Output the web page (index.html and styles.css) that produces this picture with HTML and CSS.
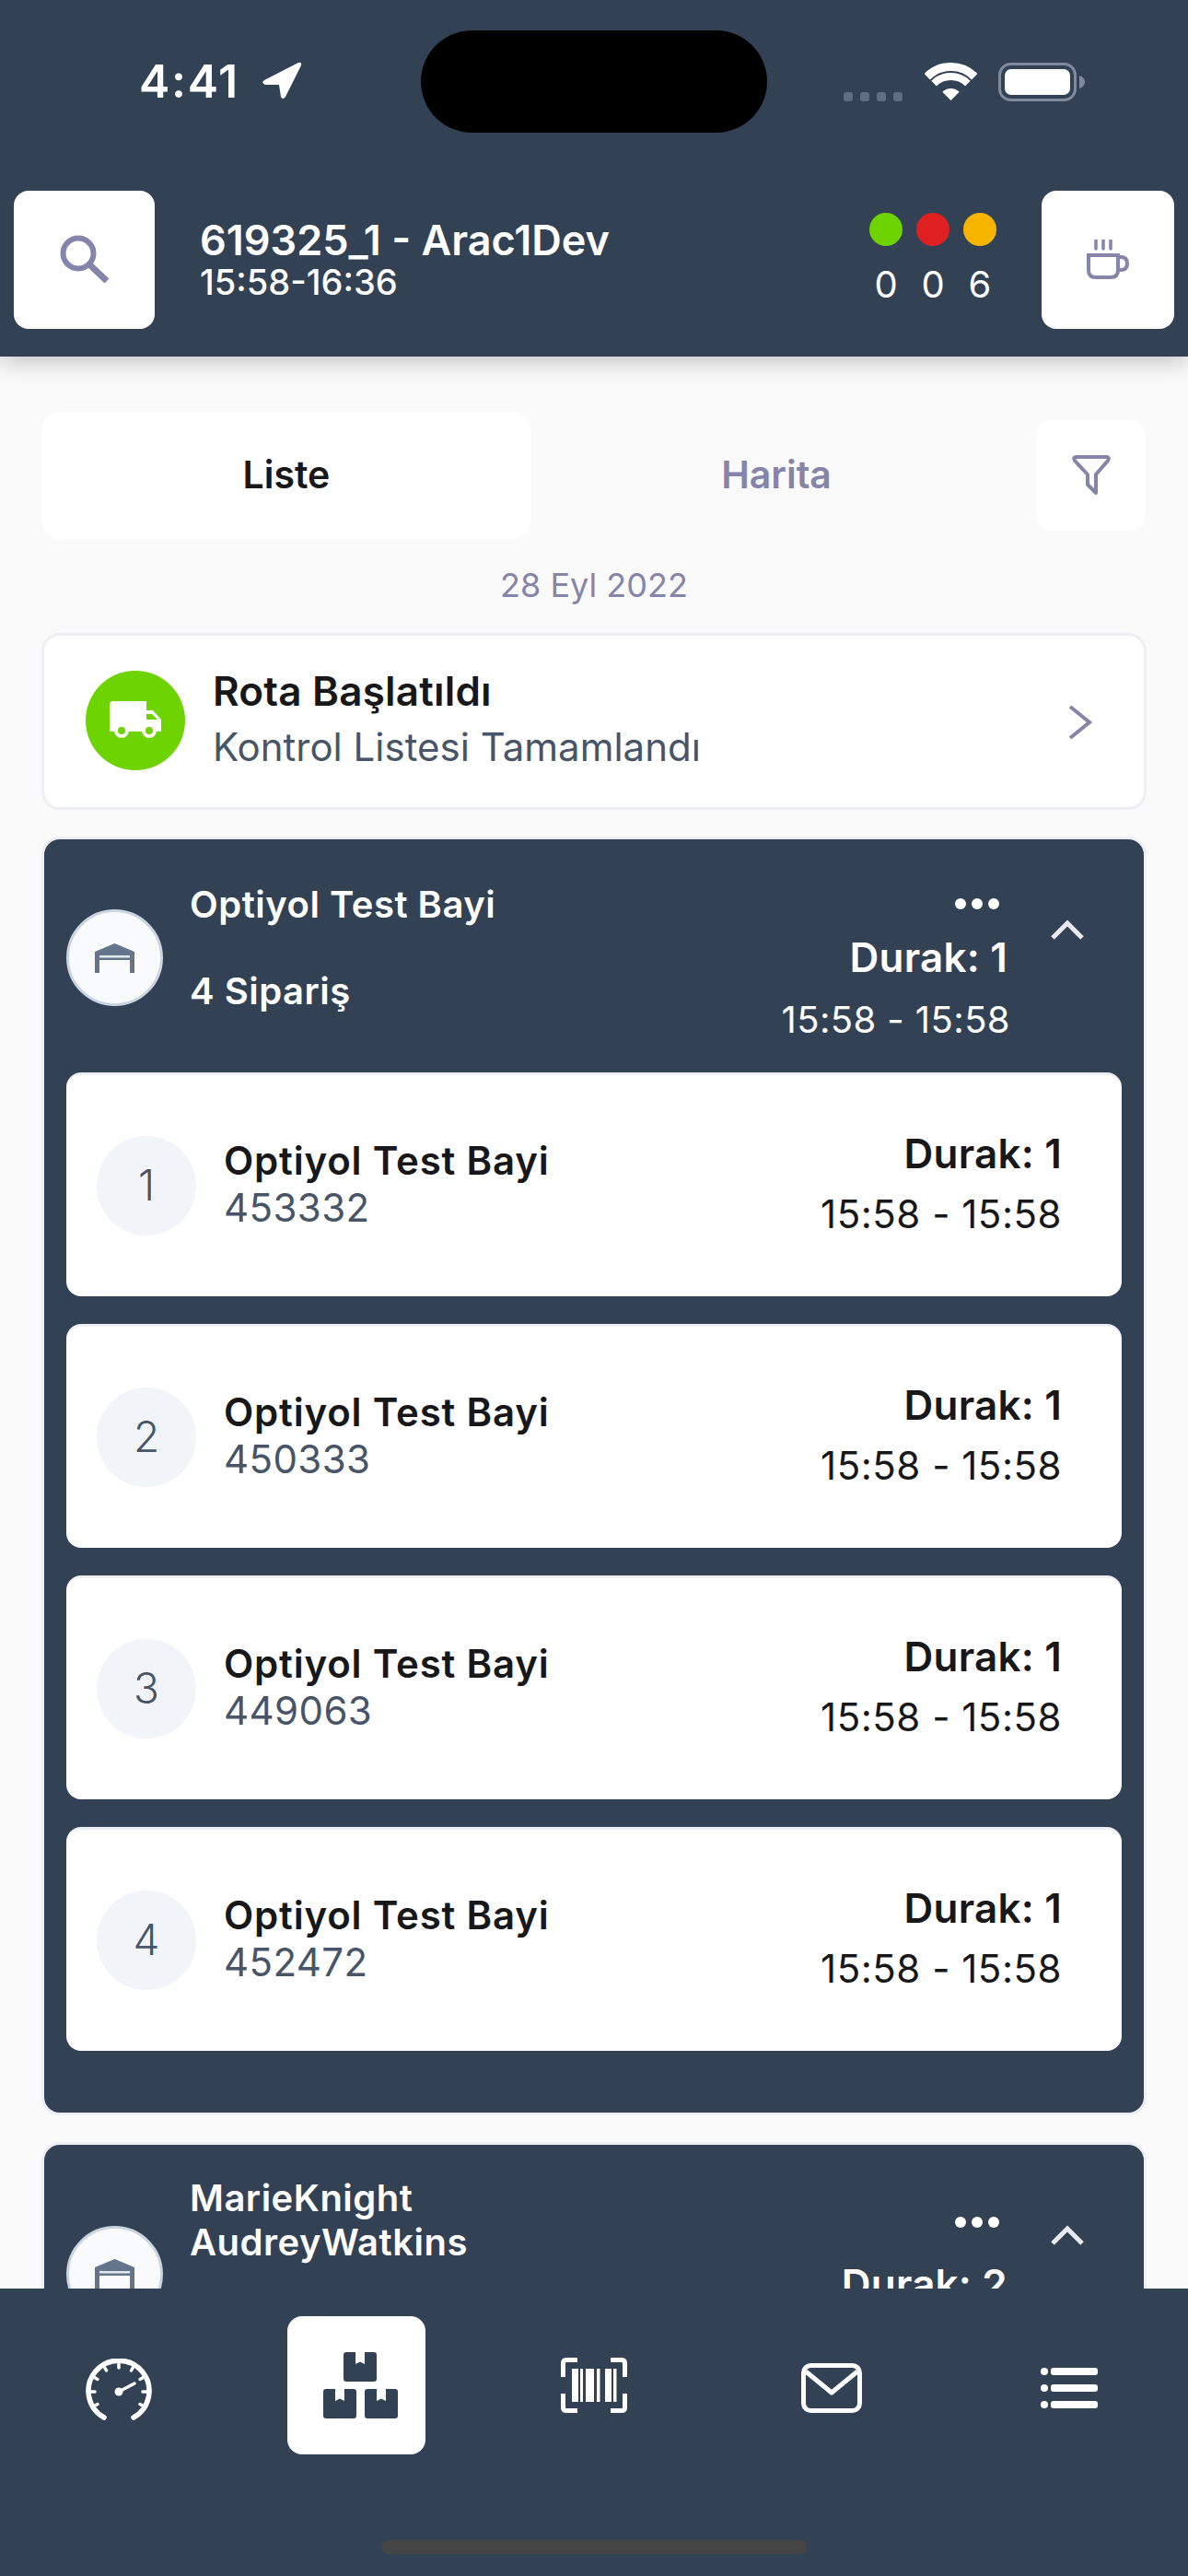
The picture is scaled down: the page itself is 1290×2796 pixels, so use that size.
FILE: index.html
```html
<!DOCTYPE html>
<html lang="tr">
<head>
  <meta charset="UTF-8" />
  <title>Rota</title>
  <link rel="stylesheet" href="styles.css">
</head>
<body>

<svg class="defs" width="0" height="0">
  <symbol id="warehouse" viewBox="0 0 43 32">
    <path d="M0 9 L21.500 0 L43 9 V32 H38 V18 H5 V32 H0 Z" fill="#64748b"/>
    <rect x="5" y="13" width="33" height="2.500" fill="#e2e8f0"/>
  </symbol>
  <symbol id="box" viewBox="0 0 36 32">
    <rect width="36" height="32" rx="3" fill="#334155"/>
    <path d="M13 0 H23 V13 L18 10.500 L13 13 Z" fill="#fff"/>
  </symbol>
</svg>

<header class="topbar">
  <div class="status">
    <div class="status-left">
      <span class="clock">4:41</span>
      <svg class="arrow" width="44" height="41" viewBox="0 0 44 41"><path d="M40 1 L3 20 Q-1 23 4 25 L19 25 L21 38 Q23 42 26 38 L43 4 Q44 0 40 1 Z" fill="#fff"/></svg>
    </div>
    <div class="island"></div>
    <div class="status-right">
      <svg width="65" height="42" viewBox="0 0 65 42" fill="#5f6e80">
        <rect y="32" width="10" height="10" rx="3"/>
        <rect x="18" y="32" width="10" height="10" rx="3"/>
        <rect x="36" y="32" width="10" height="10" rx="3"/>
        <rect x="54" y="32" width="10" height="10" rx="3"/>
      </svg>
      <svg width="57" height="42" viewBox="0 0 57 42" fill="none" stroke="#fff">
        <path d="M2.700 15.200 A36.500 36.500 0 0 1 54.300 15.200" stroke-width="9"/>
        <path d="M10.100 22.600 A26 26 0 0 1 46.900 22.600" stroke-width="8"/>
        <path d="M28.500 41 L19.300 31.800 A13 13 0 0 1 37.700 31.800 Z" fill="#fff" stroke="none"/>
      </svg>
      <svg width="94" height="42" viewBox="0 0 94 42">
        <rect x="1.500" y="1.500" width="82" height="39" rx="12" fill="none" stroke="#7f8b9b" stroke-width="3"/>
        <rect x="7" y="7" width="71" height="28" rx="7" fill="#fff"/>
        <path d="M88 14 Q94 16 94 21 Q94 26 88 28 Z" fill="#7f8b9b"/>
      </svg>
    </div>
  </div>

  <div class="appbar">
    <button class="square-btn search-btn">
      <svg width="54" height="54" viewBox="0 0 54 54" fill="none" stroke="#8584aa" stroke-width="6">
        <circle cx="20" cy="20" r="16.500"/>
        <path d="M32 32 L51 50" stroke-width="7"/>
      </svg>
    </button>
    <div class="route">
      <div class="route-name">619325_1 - Arac1Dev</div>
      <div class="route-time">15:58-16:36</div>
    </div>
    <div class="counters">
      <div class="counter"><span class="dot dot-green"></span><span>0</span></div>
      <div class="counter"><span class="dot dot-red"></span><span>0</span></div>
      <div class="counter"><span class="dot dot-amber"></span><span>6</span></div>
    </div>
    <button class="square-btn coffee-btn">
      <svg width="46" height="44" viewBox="0 0 46 44" fill="none" stroke="#8584aa" stroke-width="4">
        <path d="M10 1 V10 M18 1 V10 M26 1 V10" stroke-linecap="round" stroke-width="3.500"/>
        <path d="M2 17 H34 V33 Q34 41 26 41 H10 Q2 41 2 33 Z"/>
        <path d="M34 19 H37 Q44 19 44 26 Q44 33 37 33 H34"/>
      </svg>
    </button>
  </div>
</header>

<main class="content">
  <div class="tabs">
    <div class="tab tab-active">Liste</div>
    <div class="tab">Harita</div>
    <button class="filter-btn">
      <svg width="42" height="46" viewBox="0 0 42 46" fill="none" stroke="#8584aa" stroke-width="4" stroke-linejoin="round" stroke-linecap="round">
        <path d="M4 3 H38 Q41 3 39 7 L26 22 V42 L17 33 V22 L3 7 Q1 3 4 3 Z"/>
      </svg>
    </button>
  </div>

  <div class="date">28 Eyl 2022</div>

  <div class="notice">
    <div class="notice-icon">
      <svg width="56" height="41" viewBox="0 0 56 41">
        <path d="M4 0 H40 V10 H47 L56 20 V33 H0 V4 Q0 0 4 0 Z" fill="#fff"/>
        <path d="M40 14 H46 L52 20 H40 Z" fill="#6dd400"/>
        <circle cx="13" cy="32" r="8" fill="#fff"/>
        <circle cx="13" cy="32" r="4" fill="#6dd400"/>
        <circle cx="43" cy="32" r="8" fill="#fff"/>
        <circle cx="43" cy="32" r="4" fill="#6dd400"/>
      </svg>
    </div>
    <div class="notice-text">
      <div class="notice-title">Rota Başlatıldı</div>
      <div class="notice-sub">Kontrol Listesi Tamamlandı</div>
    </div>
    <svg class="notice-arrow" width="28" height="38" viewBox="0 0 28 38" fill="none" stroke="#8584aa" stroke-width="4">
      <path d="M3 2 L24 19 L3 36"/>
    </svg>
  </div>

  <section class="stop">
    <div class="stop-head">
      <div class="stop-avatar"><svg width="43" height="32"><use href="#warehouse"/></svg></div>
      <div class="stop-text">
        <div class="stop-name">Optiyol Test Bayi</div>
        <div class="stop-count">4 Sipariş</div>
      </div>
      <div class="stop-side">
        <div class="more"><i></i><i></i><i></i></div>
        <div class="stop-no">Durak: 1</div>
        <div class="stop-time">15:58 - 15:58</div>
      </div>
      <svg class="collapse" width="36" height="22" viewBox="0 0 36 22" fill="none" stroke="#e9e9f2" stroke-width="5">
        <path d="M2 20 L18 4 L34 20"/>
      </svg>
    </div>

    <div class="orders">
      <div class="order">
        <div class="order-num">1</div>
        <div class="order-text">
          <div class="order-name">Optiyol Test Bayi</div>
          <div class="order-id">453332</div>
        </div>
        <div class="order-side">
          <div class="order-no">Durak: 1</div>
          <div class="order-time">15:58 - 15:58</div>
        </div>
      </div>
      <div class="order">
        <div class="order-num">2</div>
        <div class="order-text">
          <div class="order-name">Optiyol Test Bayi</div>
          <div class="order-id">450333</div>
        </div>
        <div class="order-side">
          <div class="order-no">Durak: 1</div>
          <div class="order-time">15:58 - 15:58</div>
        </div>
      </div>
      <div class="order">
        <div class="order-num">3</div>
        <div class="order-text">
          <div class="order-name">Optiyol Test Bayi</div>
          <div class="order-id">449063</div>
        </div>
        <div class="order-side">
          <div class="order-no">Durak: 1</div>
          <div class="order-time">15:58 - 15:58</div>
        </div>
      </div>
      <div class="order">
        <div class="order-num">4</div>
        <div class="order-text">
          <div class="order-name">Optiyol Test Bayi</div>
          <div class="order-id">452472</div>
        </div>
        <div class="order-side">
          <div class="order-no">Durak: 1</div>
          <div class="order-time">15:58 - 15:58</div>
        </div>
      </div>
    </div>
  </section>

  <section class="stop">
    <div class="stop-head">
      <div class="stop-avatar"><svg width="43" height="32"><use href="#warehouse"/></svg></div>
      <div class="stop-text">
        <div class="stop-name">MarieKnight<br>AudreyWatkins</div>
        <div class="stop-count">2 Sipariş</div>
      </div>
      <div class="stop-side stop-side-tall">
        <div class="more"><i></i><i></i><i></i></div>
        <div class="stop-no">Durak: 2</div>
        <div class="stop-time">16:05 - 16:05</div>
      </div>
      <svg class="collapse" width="36" height="22" viewBox="0 0 36 22" fill="none" stroke="#e9e9f2" stroke-width="5">
        <path d="M2 20 L18 4 L34 20"/>
      </svg>
    </div>
  </section>
</main>

<nav class="bottombar">
  <div class="nav-items">
    <div class="nav-item nav-gauge">
      <svg width="72" height="68" viewBox="0 0 72 68" fill="none" stroke="#fff" stroke-linecap="round">
        <path d="M20 64 A33 33 0 1 1 52 64" stroke-width="5.500"/>
        <g stroke-width="3.500">
          <path d="M36 5 V10"/>
          <path d="M20 8.500 L22.500 13"/>
          <path d="M52 8.500 L49.500 13"/>
          <path d="M8.500 20 L13 22.500"/>
          <path d="M63.500 20 L59 22.500"/>
          <path d="M5 36 H10"/>
          <path d="M67 36 H62"/>
          <path d="M8.500 52 L13 49.500"/>
          <path d="M63.500 52 L59 49.500"/>
        </g>
        <circle cx="36" cy="36" r="4.500" fill="#fff" stroke="none"/>
        <path d="M36 36 L53 27" stroke-width="3.500"/>
      </svg>
    </div>
    <div class="nav-item nav-active">
      <svg class="boxes" width="81" height="72" viewBox="0 0 81 72">
        <use href="#box" x="22" y="0" width="36" height="32"/>
        <use href="#box" x="0" y="40" width="36" height="32"/>
        <use href="#box" x="45" y="40" width="36" height="32"/>
      </svg>
    </div>
    <div class="nav-item">
      <svg width="72" height="60" viewBox="0 0 72 60" fill="none" stroke="#fff" stroke-width="5">
        <path d="M18 2.500 H6 Q2.500 2.500 2.500 6 V21"/>
        <path d="M54 2.500 H66 Q69.500 2.500 69.500 6 V21"/>
        <path d="M18 57.500 H6 Q2.500 57.500 2.500 54 V39"/>
        <path d="M54 57.500 H66 Q69.500 57.500 69.500 54 V39"/>
        <g fill="#fff" stroke="none">
          <rect x="12" y="12" width="7" height="36"/>
          <rect x="21" y="12" width="3" height="36"/>
          <rect x="27" y="12" width="9" height="36"/>
          <rect x="39" y="12" width="3.500" height="36"/>
          <rect x="48" y="12" width="7" height="36"/>
          <rect x="57" y="12" width="3.500" height="36"/>
        </g>
      </svg>
    </div>
    <div class="nav-item nav-low">
      <svg width="66" height="54" viewBox="0 0 66 54" fill="none" stroke="#fff" stroke-width="5" stroke-linejoin="round">
        <rect x="2.500" y="2.500" width="61" height="49" rx="8"/>
        <path d="M5 9 L33 32 L61 9"/>
      </svg>
    </div>
    <div class="nav-item nav-low">
      <svg width="62" height="44" viewBox="0 0 62 44" fill="#fff">
        <circle cx="4" cy="4" r="4"/>
        <rect x="11" width="51" height="8" rx="3"/>
        <circle cx="4" cy="22" r="4"/>
        <rect x="11" y="18" width="51" height="8" rx="3"/>
        <circle cx="4" cy="40" r="4"/>
        <rect x="11" y="36" width="51" height="8" rx="3"/>
      </svg>
    </div>
  </div>
  <div class="home-bar"></div>
</nav>

</body>
</html>
```

FILE: styles.css
```css
* {
  box-sizing: border-box;
}

body {
  margin: 0;
  width: 1290px;
  height: 2796px;
  overflow: hidden;
  display: flex;
  flex-direction: column;
  font-family: "Inter", "Liberation Sans", sans-serif;
  background: #fafafa;
}

.defs {
  display: block;
  height: 0;
}

button {
  border: none;
  padding: 0;
  display: flex;
  align-items: center;
  justify-content: center;
  background: #fff;
}

/* top bar */
.topbar {
  flex-shrink: 0;
  height: 387px;
  padding-top: 33px;
  background: #334155;
  box-shadow: 0 6px 24px rgba(0, 0, 0, 0.22);
  position: relative;
  z-index: 2;
  color: #fff;
}

.status {
  display: grid;
  grid-template-columns: 1fr 376px 1fr;
  height: 111px;
  align-items: center;
}

.status-left {
  display: flex;
  align-items: center;
  gap: 24px;
  padding: 0 0 2px 151px;
}

.clock {
  font-size: 50px;
  font-weight: 600;
  line-height: 50px;
  letter-spacing: 1.7px;
}

.island {
  height: 111px;
  background: #000;
  border-radius: 56px;
}

.status-right {
  display: flex;
  align-items: center;
  justify-content: flex-end;
  gap: 23px;
  padding-right: 112px;
}

.appbar {
  display: flex;
  align-items: center;
  margin-top: 63px;
  padding: 0 15px;
}

.square-btn {
  height: 150px;
  border-radius: 16px;
  flex-shrink: 0;
}

.search-btn {
  width: 153px;
}

.coffee-btn {
  width: 144px;
  margin-left: 49px;
}

.route {
  flex: 1;
  padding: 0 0 2px 49px;
}

.route-name {
  font-size: 45px;
  font-weight: 600;
  line-height: 50px;
}

.route-time {
  font-size: 38px;
  font-weight: 500;
  line-height: 40px;
}

.counters {
  display: flex;
  gap: 15px;
  padding-bottom: 2px;
}

.counter {
  width: 36px;
  display: flex;
  flex-direction: column;
  align-items: center;
  gap: 20px;
  font-size: 40px;
  line-height: 44px;
}

.dot {
  width: 36px;
  height: 36px;
  border-radius: 50%;
  flex-shrink: 0;
}

.dot-green { background: #6dd400; }
.dot-red { background: #e02020; }
.dot-amber { background: #f7b500; }

/* scrolling part */
.content {
  flex: 1;
  min-height: 0;
  overflow: hidden;
  padding: 60px 45px 0;
}

.tabs {
  display: flex;
  align-items: center;
}

.tab {
  width: 532px;
  height: 138px;
  padding-bottom: 2px;
  display: flex;
  align-items: center;
  justify-content: center;
  font-size: 41px;
  font-weight: 600;
  color: #8584aa;
  border-radius: 20px;
}

.tab-active {
  background: #fff;
  color: #18181b;
}

.filter-btn {
  width: 119px;
  height: 120px;
  margin-left: 16px;
  border-radius: 16px;
}

.date {
  margin: 28px 0 30px;
  text-align: center;
  font-size: 36px;
  line-height: 44px;
  color: #8584aa;
}

.notice {
  display: flex;
  align-items: center;
  height: 192px;
  padding: 0 55px 0 45px;
  background: #fff;
  border: 3px solid #eeeef5;
  border-radius: 20px;
}

.notice-icon {
  width: 108px;
  height: 108px;
  margin-bottom: 3px;
  border-radius: 50%;
  background: #6dd400;
  display: flex;
  align-items: center;
  justify-content: center;
  flex-shrink: 0;
}

.notice-text {
  flex: 1;
  padding: 0 0 6px 30px;
}

.notice-title {
  font-size: 44px;
  font-weight: 600;
  line-height: 60px;
  letter-spacing: 0.2px;
  color: #18181b;
}

.notice-sub {
  font-size: 42px;
  line-height: 61px;
  color: #475569;
}

.notice-arrow {
  margin-top: 2px;
}

.stop {
  margin-top: 29px;
  padding: 0 24px 67px;
  background: #334155;
  border: 3px solid #eeeef5;
  border-radius: 20px;
  color: #fff;
}

.stop-head {
  display: flex;
  align-items: center;
  min-height: 253px;
  padding: 34px 0;
}

.stop-avatar {
  width: 105px;
  height: 105px;
  margin-top: 4px;
  border-radius: 50%;
  background: #f8fafc;
  border: 3px solid #cbd5e1;
  display: flex;
  align-items: center;
  justify-content: center;
  flex-shrink: 0;
}

.stop-text {
  flex: 1;
  padding: 0 0 18px 29px;
  display: flex;
  flex-direction: column;
  gap: 46px;
}

.stop-name,
.stop-count {
  font-size: 40px;
  font-weight: 600;
  line-height: 48px;
  letter-spacing: 0.5px;
}

.stop-side {
  margin-top: 30px;
  display: flex;
  flex-direction: column;
  align-items: flex-end;
}

.stop-side-tall {
  margin-top: 44px;
}

.more {
  display: flex;
  gap: 6px;
  margin-right: 9px;
  height: 12px;
}

.more i {
  width: 12px;
  height: 12px;
  border-radius: 50%;
  background: #fff;
}

.stop-no {
  margin-top: 27px;
  font-size: 44px;
  font-weight: 600;
  line-height: 50px;
  letter-spacing: 0.2px;
}

.stop-side-tall .stop-no {
  margin-top: 36px;
}

.stop-time {
  margin: 20px -3px 0 0;
  font-size: 40px;
  line-height: 46px;
  letter-spacing: 0.4px;
}

.collapse {
  align-self: flex-start;
  margin: 53px 41px 0 47px;
  flex-shrink: 0;
}

.orders {
  display: flex;
  flex-direction: column;
  gap: 30px;
}

.order {
  display: flex;
  align-items: center;
  height: 243px;
  padding: 0 65px 0 33px;
  background: #fff;
  border-top: 3px solid #eeeef5;
  border-radius: 16px;
  color: #18181b;
}

.order-num {
  width: 108px;
  height: 108px;
  padding-bottom: 2px;
  border-radius: 50%;
  background: #f1f5f9;
  color: #475569;
  font-size: 46px;
  font-weight: 300;
  display: flex;
  align-items: center;
  justify-content: center;
  flex-shrink: 0;
}

.order-text {
  flex: 1;
  padding: 0 0 7px 30px;
}

.order-name {
  font-size: 42px;
  font-weight: 600;
  line-height: 54px;
  letter-spacing: 0.8px;
}

.order-id {
  font-size: 42px;
  line-height: 48px;
  letter-spacing: 0.4px;
  color: #475569;
}

.order-side {
  padding-bottom: 5px;
  text-align: right;
}

.order-no {
  font-size: 44px;
  font-weight: 600;
  line-height: 50px;
  letter-spacing: 0.2px;
}

.order-time {
  margin-top: 16px;
  font-size: 42px;
  line-height: 50px;
  letter-spacing: 0.5px;
}

/* bottom nav */
.bottombar {
  flex-shrink: 0;
  height: 312px;
  padding-top: 30px;
  background: #334155;
  position: relative;
  z-index: 2;
}

.nav-items {
  display: grid;
  grid-template-columns: repeat(5, 1fr);
}

.nav-item {
  height: 150px;
  display: flex;
  align-items: center;
  justify-content: center;
}

.nav-gauge {
  padding-top: 9px;
}

.nav-low {
  padding-top: 6px;
}

.nav-active {
  width: 150px;
  justify-self: center;
  background: #fff;
  border-radius: 16px;
}

.boxes {
  margin-left: 8px;
}

.home-bar {
  width: 462px;
  height: 15px;
  margin: 93px auto 0;
  background: #454545;
  border-radius: 8px;
}
```
